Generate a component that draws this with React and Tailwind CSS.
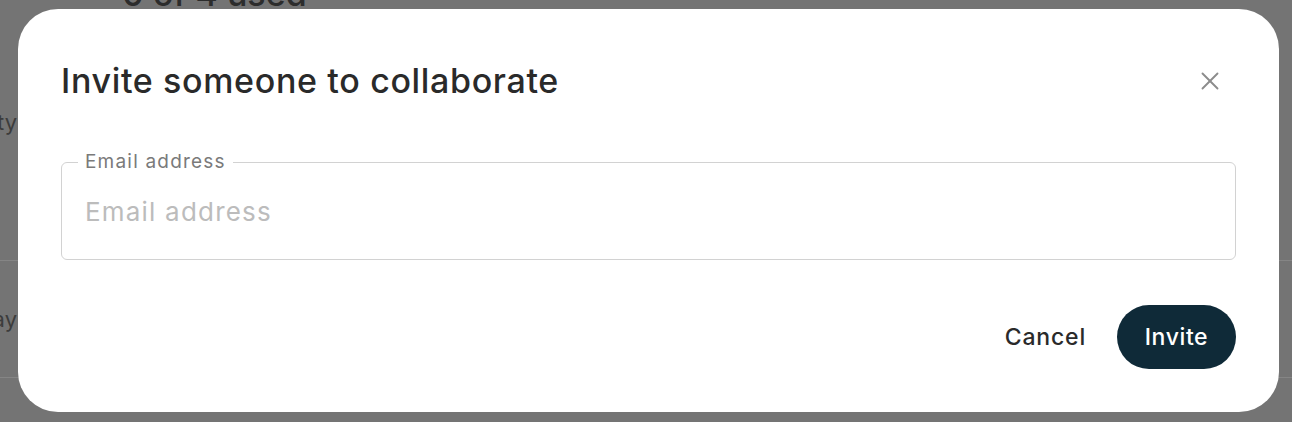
import { X } from 'lucide-react'

function BackgroundPage() {
  return (
    <div className="flex flex-col text-[#2c2c2c]" style={{ fontFamily: 'Inter, sans-serif' }}>
      <div className="pl-[122px] -mt-[26px] h-[35px] text-[34px] leading-[40px] font-medium">0 of 4 used</div>
      <div className="h-[251px] flex items-start pt-[97px]">
        <div className="w-[17px] flex justify-end whitespace-nowrap text-[22px] text-[#3c3c3c]">Capacity</div>
      </div>
      <div className="h-[117px] border-t border-[#858585] flex items-center">
        <div className="w-[17px] flex justify-end whitespace-nowrap text-[22px] text-[#3c3c3c]">Display</div>
      </div>
      <div className="border-t border-[#858585] h-[46px]" />
    </div>
  )
}

export default function App() {
  return (
    <div className="relative h-[422px] w-full overflow-hidden bg-[#747474]">
      <BackgroundPage />

      <div
        className="absolute left-[18px] top-[9px] w-[1261px] h-[403px] rounded-[40px] bg-white px-[43px] pt-[50px] flex flex-col"
        style={{ fontFamily: 'Inter, "Noto Sans", sans-serif' }}
      >
        <div className="flex items-center justify-between">
          <h2 className="text-[34px] leading-[44px] font-medium text-[#2a2a2a] tracking-[0.65px]">
            Invite someone to collaborate
          </h2>
          <button className="w-[44px] h-[44px] mr-[4px] flex items-center justify-center text-[#8c8c8c]">
            <X size={30} strokeWidth={1.5} />
          </button>
        </div>

        <fieldset className="mt-[48px] border border-[#d2d2d2] rounded-[6px] px-[16px]">
          <legend className="px-[7px] text-[19px] leading-[22px] text-[#7a7a7a] tracking-[1.2px]">Email address</legend>
          <input
            type="email"
            placeholder="Email address"
            className="w-full h-[76px] mb-[10px] pl-[7px] text-[26px] tracking-[1.2px] text-[#2a2a2a] placeholder:text-[#bcbcbc] outline-none bg-transparent"
          />
        </fieldset>

        <div className="mt-[45px] flex items-center justify-end gap-[31px]">
          <button className="text-[23px] font-medium text-[#2a2a2a] tracking-[0.8px]">Cancel</button>
          <button className="h-[64px] w-[119px] rounded-full bg-[#0f2a38] text-white text-[23px] font-medium tracking-[0.6px]">
            Invite
          </button>
        </div>
      </div>
    </div>
  )
}
